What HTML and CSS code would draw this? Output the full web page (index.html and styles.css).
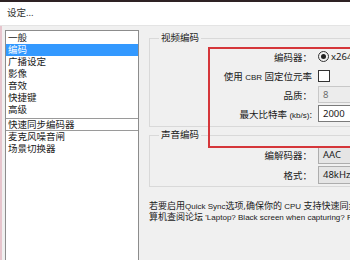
FILE: index.html
```html
<!DOCTYPE html>
<html lang="zh-CN">
<head>
  <meta charset="UTF-8">
  <title>设定</title>
  <link rel="stylesheet" href="styles.css">
</head>
<body>
  <div class="topline"></div>
  <div class="titlebar">设定...</div>

  <div class="window">
    <ul class="pages">
      <li>一般</li>
      <li class="selected">编码</li>
      <li>广播设定</li>
      <li>影像</li>
      <li>音效</li>
      <li>快捷键</li>
      <li>高级</li>
      <li class="split">快速同步编码器</li>
      <li>麦克风噪音闸</li>
      <li>场景切换器</li>
    </ul>

    <div class="panel">
      <fieldset class="group video">
        <legend>视频编码</legend>
        <div class="form">
          <label>编码器：</label>
          <span class="radio"><i></i>x264</span>
          <label>使用 <span class="en">CBR</span> 固定位元率</label>
          <span class="check"></span>
          <label>品质：</label>
          <span class="field disabled">8</span>
          <label>最大比特率 <span class="en">(kb/s)</span>:</label>
          <span class="field">2000</span>
        </div>
      </fieldset>

      <fieldset class="group audio">
        <legend>声音编码</legend>
        <div class="form">
          <label>编解码器：</label>
          <span class="field combo">AAC</span>
          <label>格式：</label>
          <span class="field combo">48kHz</span>
        </div>
      </fieldset>

      <p class="note">若要启用<span class="en">Quick Sync</span>选项,确保你的 <span class="en">CPU</span> 支持快速同步<br>算机查阅论坛 <span class="en">'Laptop? Black screen when capturing? R</span></p>
    </div>

    <div class="highlight"></div>
  </div>
</body>
</html>
```

FILE: styles.css
```css
html, body {
  margin: 0;
  width: 350px;
  height: 260px;
  overflow: hidden;
}

body {
  font-family: "Noto Sans", "Noto Sans CJK SC", sans-serif;
  font-size: 9.5px;
  color: #1a1a1a;
  background-color: #f0f0f0;
}

.en {
  font-family: "Liberation Sans", sans-serif;
  font-size: 8px;
}

.topline {
  height: 2px;
  background-color: #2e2224;
}

.titlebar {
  height: 24px;
  line-height: 22px;
  padding-left: 7px;
  background-color: #fff;
  border-bottom: 1px solid #e4e4e4;
  box-sizing: border-box;
  color: #333;
}

.window {
  position: relative;
  display: flex;
  height: 236px;
  overflow: hidden;
  border-left: 2px solid #e7c5cd;
  background-color: #f0f0f0;
}

.pages {
  list-style: none;
  flex-shrink: 0;
  margin: 4px 0 0 3px;
  padding: 1px 0 0;
  width: 134px;
  box-sizing: border-box;
  background-color: #fff;
  border: 1px solid #8c8c8c;
  border-bottom: none;
}

.pages li {
  height: 12px;
  line-height: 12px;
  padding-left: 2px;
}

.pages li.selected {
  background-color: #3399ff;
  color: #fff;
}

.pages li.split {
  border-top: 1px solid #9a9a9a;
  border-bottom: 1px solid #9a9a9a;
  line-height: 11px;
  height: 11px;
  margin-top: 2px;
}

.panel {
  margin-left: 10px;
  padding-top: 6px;
  width: 240px;
  flex-shrink: 0;
}

.group {
  margin: 0;
  padding: 3px 0 0 6px;
  border: 1px solid #d9d9d9;
  min-width: 0;
}

.group legend {
  padding: 0 2px;
  margin-left: 3px;
  line-height: 12px;
}

.video {
  height: 95px;
  box-sizing: border-box;
}

.audio {
  margin-top: 2px;
  height: 58px;
  box-sizing: border-box;
}

.form {
  display: grid;
  grid-template-columns: 156px auto;
  grid-auto-rows: 19px;
  column-gap: 6px;
  align-items: center;
}

.audio .form {
  grid-auto-rows: 20px;
  padding-top: 1px;
}

.form label {
  text-align: right;
  white-space: nowrap;
}

.radio {
  display: flex;
  align-items: center;
  gap: 2px;
}

.radio i {
  width: 9px;
  height: 9px;
  border: 1px solid #333;
  border-radius: 50%;
  position: relative;
}

.radio i::after {
  content: "";
  position: absolute;
  left: 2px;
  top: 2px;
  width: 5px;
  height: 5px;
  border-radius: 50%;
  background-color: #222;
}

.check {
  width: 10px;
  height: 10px;
  border: 1px solid #333;
  background-color: #fff;
}

.field {
  height: 17px;
  line-height: 15px;
  width: 60px;
  box-sizing: border-box;
  padding-left: 4px;
  border: 1px solid #7a7a7a;
  background-color: #fff;
}

.field.disabled {
  background-color: #ececec;
  border-color: #c8c8c8;
  color: #6d6d6d;
}

.field.combo {
  height: 18px;
  line-height: 16px;
  background-color: #e5e5e5;
  border-color: #adadad;
}

.note {
  margin: 14px 0 0;
  font-size: 9px;
  line-height: 10px;
  white-space: nowrap;
}

.highlight {
  position: absolute;
  left: 206px;
  right: 0;
  top: 21px;
  height: 101px;
  border: 2px solid #d5363a;
  border-right: none;
  box-sizing: border-box;
}
```
